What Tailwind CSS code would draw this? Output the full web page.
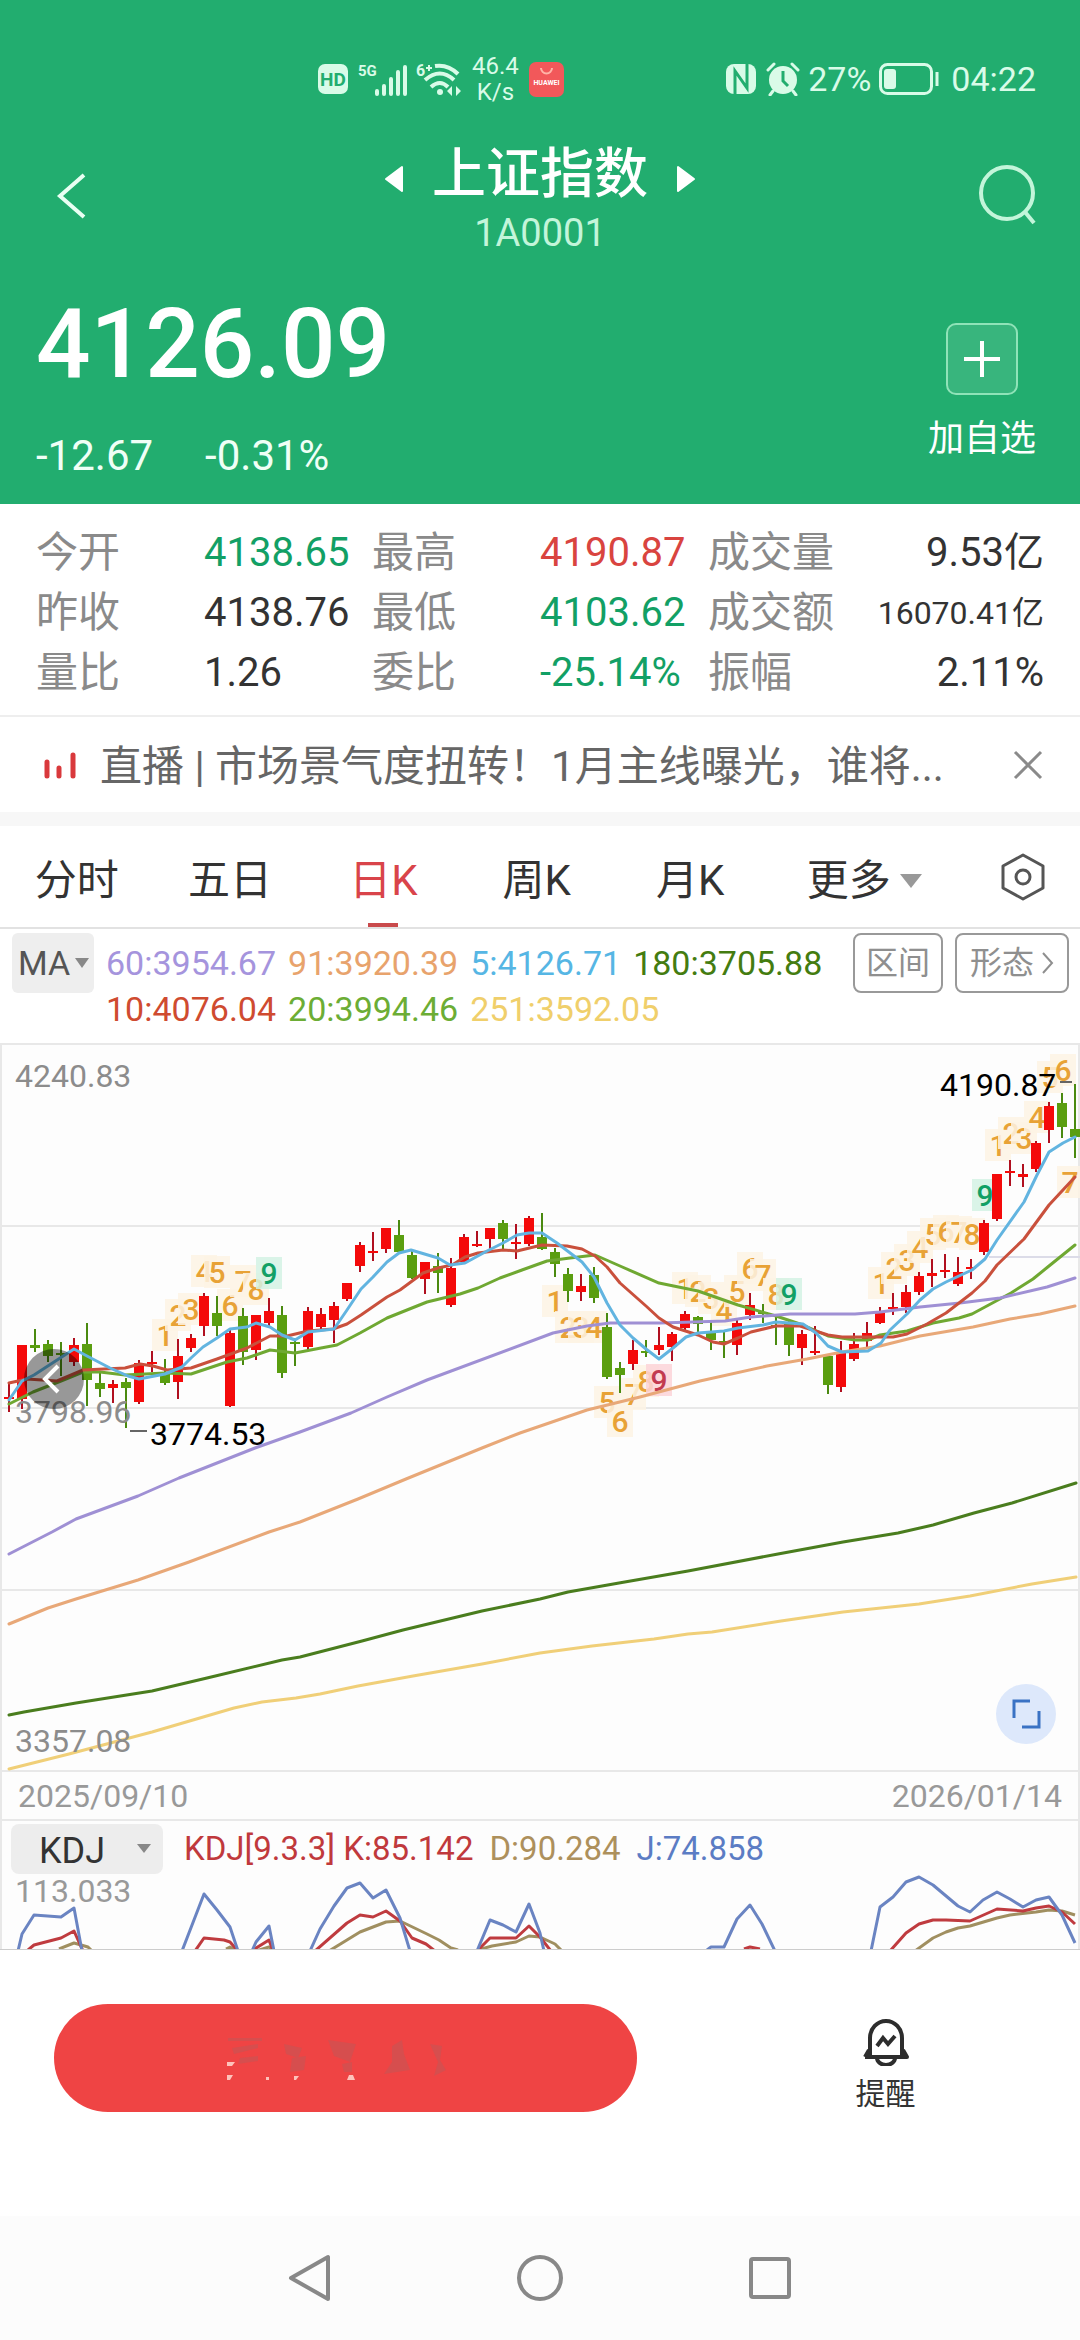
<!DOCTYPE html>
<html lang="zh-CN">
<head>
<meta charset="utf-8">
<meta name="viewport" content="width=device-width, initial-scale=1">
<title>上证指数 1A0001</title>
<script src="https://cdn.jsdelivr.net/npm/@tailwindcss/browser@4"></script>
</head>
<body class="bg-[#fdfdfd] font-[Roboto,'Noto_Sans_CJK_SC',sans-serif] text-[#333333]">
<header class="bg-[#22ad6f] text-white">
  <!-- status bar -->
  <div class="flex items-center justify-between pt-14 pr-11 pl-[318px] text-[#d9fbe8]">
    <div class="flex h-[46px] items-center">
      <svg class="h-[30px] w-[30px]" viewBox="0 0 30 30"><rect width="30" height="30" rx="7" fill="#d9fbe8"/><text x="15" y="22" text-anchor="middle" font-size="19" font-weight="700" fill="#22ad6f">HD</text></svg>
      <svg class="ml-[10px] h-9 w-[50px]" viewBox="0 0 50 36"><text x="0" y="15" font-size="15" font-weight="700" fill="currentColor">5G</text><path d="M19 33v-3M26 33V25M33 33V18M40 33V11M47 33V6" stroke="currentColor" stroke-width="4" stroke-linecap="round"/></svg>
      <svg class="ml-2 h-9 w-[48px]" viewBox="0 0 48 36"><text x="0" y="15" font-size="16" font-weight="700" fill="currentColor">6</text><path d="M10 7h6M13 4v6" stroke="currentColor" stroke-width="2"/><g fill="none" stroke="currentColor" stroke-width="4"><path d="M19 5Q32 3 42 13"/><path d="M9 19Q24 6 38 19"/><path d="M15 26Q24 18 32 26"/></g><circle cx="24" cy="31" r="3" fill="currentColor"/><path d="M36 25v10l-5-5zM40 25v10l5-5z" fill="currentColor"/></svg>
      <div class="ml-2 text-center text-2xl leading-[26px]"><div>46.4</div><div>K/s</div></div>
      <svg class="ml-[10px] h-[35px] w-[35px]" viewBox="0 0 35 35"><rect width="35" height="35" rx="7" fill="#f2585a"/><path d="M12 6a5.500 5.500 0 0 0 11 0" fill="none" stroke="#ffb4a8" stroke-width="2"/><text x="17.500" y="23" text-anchor="middle" font-size="7" font-weight="700" fill="#fff">HUAWEI</text></svg>
    </div>
    <div class="flex items-center text-[34px] leading-[46px]">
      <svg class="h-[30px] w-[30px]" viewBox="0 0 30 30"><rect width="30" height="30" rx="8" fill="currentColor"/><path d="M9 30V7l12 17V0" fill="none" stroke="#22ad6f" stroke-width="3"/></svg>
      <svg class="ml-[10px] h-[34px] w-[34px]" viewBox="0 0 34 34"><circle cx="17" cy="18" r="14" fill="currentColor"/><path d="M17 9v10l5 5" fill="none" stroke="#22ad6f" stroke-width="3"/><path d="M2 8l6-6M32 8l-6-6M7 29l-3 4M27 29l3 4" stroke="currentColor" stroke-width="3" stroke-linecap="round"/></svg>
      <span class="ml-2">27%</span>
      <svg class="ml-2 h-8 w-[60px]" viewBox="0 0 60 32"><rect x="1.500" y="1.500" width="51" height="29" rx="7" fill="none" stroke="currentColor" stroke-width="3"/><rect x="5" y="6" width="12" height="20" rx="3" fill="currentColor"/><path d="M58 9v14" stroke="currentColor" stroke-width="3"/></svg>
      <span class="ml-3">04:22</span>
    </div>
  </div>
  <!-- title bar -->
  <div class="mt-[34px] grid grid-cols-[1fr_auto_1fr] items-center px-11">
    <button class="justify-self-start pl-3" aria-label="返回"><svg class="h-12 w-8" viewBox="0 0 32 48"><path d="M28 3L4 24l24 21" fill="none" stroke="#e9fff3" stroke-width="4"/></svg></button>
    <div class="text-center">
      <div class="flex items-center justify-center gap-7 pt-1 leading-[70px]">
        <button class="pt-2" aria-label="上一个"><svg class="h-7 w-5" viewBox="0 0 20 28"><path d="M18 2v24L2 14z" fill="#fff" stroke="#fff" stroke-width="2" stroke-linejoin="round"/></svg></button>
        <h1 class="text-[54px] font-medium">上证指数</h1>
        <button class="pt-2" aria-label="下一个"><svg class="h-7 w-5" viewBox="0 0 20 28"><path d="M2 2v24l16-12z" fill="#fff" stroke="#fff" stroke-width="2" stroke-linejoin="round"/></svg></button>
      </div>
      <div class="text-[38px] leading-[46px] text-[#c3f5da]">1A0001</div>
    </div>
    <button class="justify-self-end" aria-label="搜索"><svg class="h-[62px] w-[58px]" viewBox="0 0 58 62"><circle cx="29" cy="28" r="26" fill="none" stroke="#c3f5da" stroke-width="4"/><path d="M47 47l9 11" stroke="#c3f5da" stroke-width="4"/></svg></button>
  </div>
  <!-- price -->
  <div class="flex justify-between pt-9 pr-11 pb-6 pl-9">
    <div>
      <div class="text-[96px] leading-[104px] font-medium">4126.09</div>
      <div class="mt-9 flex gap-[52px] text-[42px] leading-12 text-[#effff6]"><span>-12.67</span><span>-0.31%</span></div>
    </div>
    <button class="flex flex-col items-center pt-[31px]">
      <span class="flex size-[72px] items-center justify-center rounded-[10px] border-2 border-[#8fe3b8] bg-white/10"><svg class="size-9" viewBox="0 0 36 36"><path d="M0 18h36M18 0v36" stroke="#fff" stroke-width="4"/></svg></span>
      <span class="mt-5 text-4xl leading-12">加自选</span>
    </button>
  </div>
</header>

<main>
  <section class="bg-white px-9 pt-[19px] pb-3">
    <table class="w-full table-fixed text-left text-[40px] leading-[60px] whitespace-nowrap [&_td]:p-0 [&_th]:p-0 [&_th]:text-[42px] [&_th]:font-normal [&_th]:text-[#8a8a8a]">
      <tr><th>今开</th><td class="text-[#12a065]">4138.65</td><th>最高</th><td class="text-[#d9443f]">4190.87</td><th>成交量</th><td class="text-right">9.53亿</td></tr>
      <tr><th>昨收</th><td>4138.76</td><th>最低</th><td class="text-[#12a065]">4103.62</td><th>成交额</th><td class="text-right text-[32px]">16070.41亿</td></tr>
      <tr><th>量比</th><td>1.26</td><th>委比</th><td class="text-[#12a065]">-25.14%</td><th>振幅</th><td class="text-right">2.11%</td></tr>
    </table>
  </section>

  <section class="flex h-[97px] items-center border-t-2 border-[#eeeeee] bg-white pr-9 pl-11">
    <svg class="h-7 w-8 shrink-0" viewBox="0 0 32 28"><path d="M3 11v14M15 17v8M29 4v21" stroke="#d9393c" stroke-width="5" stroke-linecap="round"/></svg>
    <a href="#live" class="ml-6 flex-1 pt-1 text-[42px] leading-[60px] whitespace-nowrap text-[#666666]">直播 | 市场景气度扭转！1月主线曝光，谁将...</a>
    <button aria-label="关闭"><svg class="size-8" viewBox="0 0 32 32"><path d="M3 3l26 26M29 3L3 29" stroke="#8a8a8a" stroke-width="3"/></svg></button>
  </section>
  <div class="h-[14px] bg-[#f7f7f7]"></div>

  <nav class="flex h-[103px] items-stretch border-b-2 border-[#e2e2e2] bg-white text-[42px]">
    <button class="w-[14.2%] pt-2">分时</button>
    <button class="w-[14.2%] pt-2">五日</button>
    <button class="relative w-[14.2%] pt-2 text-[#d9444a]">日K<span class="absolute bottom-0 left-1/2 h-1 w-[30px] -translate-x-1/2 bg-[#c94a4c]"></span></button>
    <button class="w-[14.2%] pt-2">周K</button>
    <button class="w-[14.2%] pt-2">月K</button>
    <button class="flex items-center gap-2 pt-2 pl-10">更多<svg class="h-4 w-6" viewBox="0 0 24 16"><path d="M1 1h22L12 15z" fill="#999"/></svg></button>
    <button class="mr-[34px] ml-auto" aria-label="设置"><svg class="h-12 w-[46px]" viewBox="0 0 46 48"><path d="M23 2l20 11v22L23 46 3 35V13z" fill="none" stroke="#555" stroke-width="3" stroke-linejoin="round"/><circle cx="23" cy="24" r="7" fill="none" stroke="#555" stroke-width="3"/></svg></button>
  </nav>

  <section class="flex items-start bg-white pt-1 pr-[11px] pb-[11px] pl-3">
    <div class="relative">
      <select aria-label="主图指标" class="h-[60px] w-[82px] appearance-none rounded-md bg-[#eeeeee] pl-[6px] text-[34px] text-[#555555]"><option>MA</option></select>
      <svg class="pointer-events-none absolute top-6 right-1 h-3 w-4" viewBox="0 0 16 12"><path d="M1 1h14L8 11z" fill="#888"/></svg>
    </div>
    <div class="mt-[7px] ml-3 flex-1 text-[34px] leading-[46px]">
      <div class="flex gap-3"><span class="text-[#a594dd]">60:3954.67</span><span class="text-[#e8a36c]">91:3920.39</span><span class="text-[#56b6e4]">5:4126.71</span><span class="text-[#447c10]">180:3705.88</span></div>
      <div class="flex gap-3"><span class="text-[#cf4b30]">10:4076.04</span><span class="text-[#6cad35]">20:3994.46</span><span class="text-[#f0cf6b]">251:3592.05</span></div>
    </div>
    <button class="h-[60px] w-[90px] rounded-lg border-2 border-[#999999] text-[32px] text-[#8f8f8f]">区间</button>
    <button class="ml-3 flex h-[60px] w-[114px] items-center justify-center gap-2 rounded-lg border-2 border-[#999999] text-[32px] text-[#8f8f8f]">形态<svg class="h-6 w-3" viewBox="0 0 12 24"><path d="M1 2l9 10-9 10" fill="none" stroke="#8f8f8f" stroke-width="2"/></svg></button>
  </section>

  <section class="relative">
    <svg class="block h-auto w-full" viewBox="0 1043 1080 729" font-size="32" role="img" aria-label="日K线图">
      <g stroke="#e8e8e8" stroke-width="2" fill="none"><path d="M0 1044H1080M1 1043V1772M1079 1043V1772M0 1226H1080M0 1408H1080M0 1590H1080M0 1771H1080"/><path d="M989 1257H1080" stroke="#dcdce8"/></g>
      <g id="marks" font-size="30" font-weight="500" text-anchor="middle"></g>
      <g id="candles"></g>
      <g fill="none" stroke-width="3" stroke-linejoin="round" stroke-linecap="round">
        <path stroke="#f0cf78" d="M9 1769L69 1754 152 1732 193 1720 234 1708 262 1702 296 1698 320 1694 358 1686 413 1676 482 1664 540 1653 592 1646 654 1639 688 1634 712 1632 781 1621 843 1612 919 1604 970 1596 1032 1584 1076 1577"/>
        <path stroke="#4a7d1e" d="M9 1715L24 1712 76 1703 152 1691 207 1678 282 1660 300 1657 362 1641 403 1630 482 1611 540 1599 568 1592 619 1583 688 1571 778 1554 843 1542 898 1533 933 1525 974 1513 1012 1503 1076 1483"/>
        <path stroke="#6fa832" d="M9 1404L33 1392 61 1381 83 1372 100 1372 125 1375 165 1373 191 1374 227 1362 247 1358 270 1350 295 1353 321 1348 337 1345 360 1333 387 1318 427 1302 460 1294 478 1288 500 1278 522 1270 547 1261 570 1258 595 1255 620 1266 659 1283 698 1291 738 1305 776 1316 803 1325 828 1336 855 1340 868 1340 880 1335 907 1331 933 1323 959 1318 972 1314 985 1307 1011 1293 1033 1279 1049 1266 1075 1245"/>
        <path stroke="#e8a878" d="M9 1624L48 1608 76 1599 138 1580 189 1562 269 1532 300 1522 358 1499 406 1479 482 1448 520 1433 587 1410 640 1397 700 1381 767 1366 807 1359 842 1352 880 1346 920 1336 973 1327 1010 1319 1040 1314 1075 1306"/>
        <path stroke="#9f90d4" d="M9 1554L52 1532 76 1519 138 1496 179 1478 255 1448 300 1432 351 1413 387 1397 427 1380 553 1333 587 1326 610 1323 660 1323 725 1321 751 1317 790 1314 855 1314 880 1312 920 1307 960 1303 1000 1298 1047 1287 1075 1278"/>
        <path stroke="#c9503c" d="M9 1383L27 1379 57 1381 83 1370 125 1368 140 1364 153 1366 167 1370 191 1368 217 1359 247 1348 270 1336 287 1336 308 1331 333 1329 347 1324 361 1315 387 1297 400 1290 423 1273 438 1268 452 1265 465 1257 478 1253 503 1250 517 1251 542 1245 567 1246 582 1249 595 1256 607 1267 620 1283 646 1306 659 1318 673 1327 698 1335 713 1342 724 1344 738 1338 751 1332 776 1326 800 1326 828 1335 842 1337 868 1337 893 1337 907 1334 927 1324 946 1313 959 1303 972 1293 985 1281 997 1265 1024 1239 1049 1205 1075 1177"/>
        <path stroke="#62b4e0" d="M9 1400L22 1381 34 1375 74 1349 87 1356 110 1368 128 1376 139 1379 165 1374 182 1367 191 1358 203 1347 217 1338 230 1329 247 1327 256 1323 270 1327 282 1335 295 1340 308 1332 334 1329 347 1310 361 1289 373 1277 387 1262 399 1253 411 1250 438 1258 450 1265 465 1263 487 1251 503 1243 517 1235 529 1233 542 1233 557 1243 582 1262 594 1277 607 1303 620 1325 633 1338 646 1349 659 1359 673 1348 686 1337 698 1333 724 1331 738 1328 763 1325 776 1322 803 1324 816 1333 828 1346 842 1352 868 1351 881 1343 890 1330 907 1314 920 1300 933 1289 946 1282 972 1270 985 1259 997 1240 1024 1202 1037 1175 1049 1152 1063 1143 1075 1137"/>
        <path stroke="#666" stroke-width="2" stroke-linecap="butt" d="M130 1431H147M1060 1082H1072"/>
      </g>
      <g fill="#8c8c8c"><text x="15" y="1087">4240.83</text><text x="15" y="1423">3798.96</text><text x="15" y="1752">3357.08</text></g>
      <g fill="#000"><text x="150" y="1445">3774.53</text><text x="940" y="1096">4190.87</text></g>
    </svg>
    <button aria-label="向前" class="absolute top-[42%] left-6 size-[60px] rounded-full bg-black/40"><svg class="size-full" viewBox="0 0 60 60"><path d="M34 17L21 30l13 13" fill="none" stroke="#fff" stroke-width="4"/></svg></button>
    <button aria-label="全屏" class="absolute right-6 bottom-7 size-[60px] rounded-full bg-[#dde8fb]"><svg class="size-full" viewBox="0 0 60 60"><path d="M34 17H18v17M26 43h17V27" fill="none" stroke="#3a72c4" stroke-width="3"/></svg></button>
  </section>

  <div class="flex h-[49px] items-center justify-between border-x-2 border-b-2 border-[#e8e8e8] px-4 text-[32px] text-[#999999]"><span>2025/09/10</span><span>2026/01/14</span></div>

  <section>
    <div class="flex items-center border-x-2 border-[#e8e8e8] pt-[3px] pl-[9px] text-[33px]">
      <div class="relative">
        <select aria-label="副图指标" class="block h-[50px] w-[152px] appearance-none rounded-lg bg-[#ededed] pl-7 text-[36px]"><option>KDJ</option></select>
        <svg class="pointer-events-none absolute top-5 right-[11px] h-[10px] w-4" viewBox="0 0 16 10"><path d="M1 0h14L8 9z" fill="#888"/></svg>
      </div>
      <span class="ml-[21px] text-[#c0393c]">KDJ[9.3.3] K:85.142</span><span class="ml-4 text-[#ad905c]">D:90.284</span><span class="ml-4 text-[#5b7cc4]">J:74.858</span>
    </div>
    <svg class="block h-auto w-full overflow-visible border-b border-[#cccccc]" viewBox="0 1874 1080 75" font-size="32" role="img" aria-label="KDJ指标图">
      <defs><clipPath id="c"><path d="M0 1860H1080V1949H0z"/></clipPath></defs>
      <path d="M1 1874V1949M1079 1874V1949" stroke="#e8e8e8" stroke-width="2"/>
      <text x="15" y="1902" fill="#999">113.033</text>
      <g fill="none" stroke-width="3" stroke-linejoin="round" clip-path="url(#c)">
        <path stroke="#a08f60" d="M59 1949L74 1943 88 1947 92 1951M226 1949L230 1947 234 1949M256 1951L269 1947 274 1951M329 1951L360 1932 386 1922 400 1921 427 1934 439 1940 451 1948 458 1950M478 1950L492 1946 516 1942 529 1936 540 1937 555 1944 562 1951M915 1951L933 1938 946 1932 958 1928 970 1926 997 1918 1010 1915 1036 1912 1049 1910 1062 1911 1075 1915"/>
        <path stroke="#bf3b3f" d="M28 1950L34 1945 61 1938 74 1931 83 1951M195 1951L204 1938 224 1940 230 1942 238 1951M253 1950L269 1940 273 1951M315 1951L347 1923 360 1915 373 1917 386 1911 400 1921 412 1938 426 1944 435 1951M478 1950L490 1938 516 1938 529 1926 540 1937 551 1951M744 1949L750 1947 760 1949M890 1951L906 1933 919 1924 933 1920 946 1920 970 1921 997 1909 1023 1911 1036 1908 1049 1906 1062 1912 1075 1924"/>
        <path stroke="#6a84c2" d="M18 1951L22 1934 34 1915 61 1917 74 1908 82 1951M182 1951L204 1894 217 1910 230 1927 238 1951M252 1951L256 1942 269 1926 274 1951M310 1951L320 1929 334 1906 347 1888 360 1883 373 1898 386 1890 400 1918 410 1951M477 1951L490 1920 503 1925 516 1932 529 1904 540 1933 544 1951M707 1950L711 1947 724 1947 737 1919 750 1905 762 1924 775 1951M871 1951L880 1907 893 1897 906 1882 919 1877 933 1885 958 1906 970 1912 983 1900 997 1892 1010 1899 1023 1907 1036 1900 1049 1897 1062 1915 1075 1943"/>
      </g>
    </svg>
  </section>
</main>

<footer>
  <div class="flex items-start bg-white pt-[54px] pb-[104px]">
    <button aria-label="交易" class="ml-[5%] flex h-[108px] w-[54%] items-center justify-center rounded-full bg-[#ef4444]">
      <svg class="mr-1 h-12 w-60" viewBox="0 0 240 48"><g fill="#b85a5a" opacity=".45"><path d="M4 4h34v3H4zM8 14l26-4v4L10 20zM16 24l18-2v5l-20 3zM60 10l18 4-4 10-12-4zM68 24l14-2-2 14-14 2zM104 6l28 4-6 18-16-6zM118 30l10-2v10h-8zM168 12l10-6 2 14 6 16-26 4 8-12zM206 10l12 2-2 14 6 10-12 6 4-14z"/></g><path d="M3 28h8l-3 4H3zM3 41h6l-3 5H3zM42 43h3v3h-3zM70 42h5l-3 4h-2zM125 41h4l2 5h-8z" fill="#ffd9d0" opacity=".85"/></svg>
    </button>
    <button class="mt-[14px] flex flex-1 flex-col items-center pl-[5%] text-[30px] leading-9">
      <svg class="size-12" viewBox="0 0 48 48"><path d="M8 38V20a16 17 0 0 1 32 0V38M3 39h42l-4-7M7 32l-4 7M15 40a9 7 0 0 0 18 0" fill="none" stroke="#2d2d2d" stroke-width="4" stroke-linejoin="round"/><path d="M15 28l6-8 5 6 7-8" fill="none" stroke="#2d2d2d" stroke-width="4"/></svg>
      <span class="mt-[10px]">提醒</span>
    </button>
  </div>
  <div class="flex h-[124px] items-center justify-center gap-[182px] bg-[#fcfcfc]">
    <button aria-label="返回"><svg class="size-12" viewBox="0 0 48 48"><path d="M42 3v42L5 24z" fill="none" stroke="#888" stroke-width="4" stroke-linejoin="round"/></svg></button>
    <button aria-label="主页"><svg class="size-12" viewBox="0 0 48 48"><circle cx="24" cy="24" r="21" fill="none" stroke="#888" stroke-width="4"/></svg></button>
    <button aria-label="最近任务"><svg class="size-12" viewBox="0 0 48 48"><rect x="5" y="5" width="38" height="38" rx="2" fill="none" stroke="#888" stroke-width="4"/></svg></button>
  </div>
</footer>

<script>
// one candle per trading day: colour, body top, body bottom, high, low
const days = `r 1397 1399 1382 1412|r 1345 1399 1345 1409|g 1345 1348 1329 1352|g 1344 1356 1340 1362|g 1353 1355 1342 1376|r 1345 1362 1338 1366|g 1344 1380 1323 1406|g 1383 1389 1373 1397|r 1384 1388 1380 1403|g 1382 1388 1378 1428|r 1363 1402 1360 1404|r 1362 1364 1351 1372|g 1373 1383 1359 1385|r 1356 1382 1339 1399|r 1338 1348 1334 1352|r 1296 1326 1293 1336|g 1313 1326 1296 1336|r 1333 1406 1328 1407|g 1316 1352 1308 1365|r 1315 1350 1315 1360|r 1311 1323 1298 1326|g 1315 1373 1306 1378|g 1342 1344 1338 1366|r 1311 1347 1307 1350|r 1314 1327 1308 1330|r 1306 1320 1302 1343|r 1283 1299 1283 1301|r 1245 1266 1242 1272|r 1251 1253 1232 1261|r 1228 1249 1228 1253|g 1235 1252 1220 1254|g 1255 1278 1251 1279|r 1262 1279 1262 1294|g 1266 1273 1253 1293|r 1268 1305 1258 1307|r 1237 1262 1234 1264|r 1244 1246 1231 1247|r 1228 1239 1228 1249|g 1223 1239 1220 1249|r 1242 1244 1224 1259|r 1218 1244 1216 1246|g 1237 1249 1213 1250|g 1252 1264 1248 1277|g 1274 1291 1268 1302|r 1286 1292 1274 1301|g 1275 1298 1267 1303|g 1327 1377 1313 1379|g 1368 1375 1362 1393|r 1350 1364 1340 1370|g 1351 1353 1340 1357|r 1345 1350 1327 1355|r 1334 1347 1332 1361|r 1314 1328 1311 1331|g 1317 1324 1316 1332|g 1332 1340 1322 1350|g 1341 1343 1332 1358|r 1323 1345 1320 1355|r 1305 1315 1293 1320|g 1312 1314 1304 1323|g 1325 1326 1317 1345|g 1323 1345 1319 1356|r 1334 1348 1330 1365|r 1351 1353 1326 1355|g 1356 1385 1356 1394|r 1352 1387 1341 1392|r 1344 1359 1333 1361|r 1333 1341 1322 1347|r 1313 1323 1307 1324|r 1307 1309 1293 1315|r 1292 1307 1285 1313|r 1276 1292 1272 1295|r 1273 1276 1259 1287|r 1270 1272 1254 1278|r 1272 1284 1257 1286|r 1267 1269 1259 1279|r 1223 1252 1220 1255|r 1174 1219 1174 1221|r 1171 1173 1160 1186|r 1174 1177 1164 1187|r 1143 1169 1141 1172|r 1106 1130 1102 1143|g 1103 1127 1093 1138|g 1129 1137 1084 1158`.split('|');
document.getElementById('candles').innerHTML = days.map((d, i) => {
  const [c, top, bottom, high, low] = d.split(' ');
  const x = 9 + 13 * i;
  return `<path d="M${x} ${high}V${low}" stroke="${c === 'r' ? '#b01020' : '#4a8a10'}" stroke-width="2"/><path d="M${x} ${top}V${bottom}" stroke="${c === 'r' ? '#f40a0a' : '#5a9e10'}" stroke-width="10"/>`;
}).join('');

// nine-turn counts: first day's x, the y of each digit, tint of the ninth
const runs = [
  [165, [1335, 1315, 1309, 1271, 1272, 1305, 1281, 1289, 1273], ['#d4f2e4', '#12a065']],
  [555, [1301, 1327, 1327, 1327, 1402, 1421, 1394, 1381, 1380], ['#fbd3d8', '#c23a50']],
  [685, [1288, 1291, 1298, 1310, 1291, 1268, 1275, 1294, 1294], ['#d4f2e4', '#12a065']],
  [881, [1283, 1268, 1260, 1247, 1234, 1231, 1232, 1234, 1195], ['#d4f2e4', '#12a065']],
  [998, [1145, 1133, 1138, 1117, 1077, 1070, 1182], null]
];
document.getElementById('marks').innerHTML = runs.map(([x0, ys, nine]) => ys.map((y, i) => {
  const x = Math.min(x0 + 13 * i, 1070);
  const [bg, fg] = i === 8 ? nine : ['#fdf3e4', '#e8a236'];
  return `<rect x="${x - 13}" y="${y - 16}" width="26" height="32" fill="${bg}" opacity=".85"/><text x="${x}" y="${y + 11}" fill="${fg}">${i + 1}</text>`;
}).join('')).join('');
</script>
</body>
</html>
